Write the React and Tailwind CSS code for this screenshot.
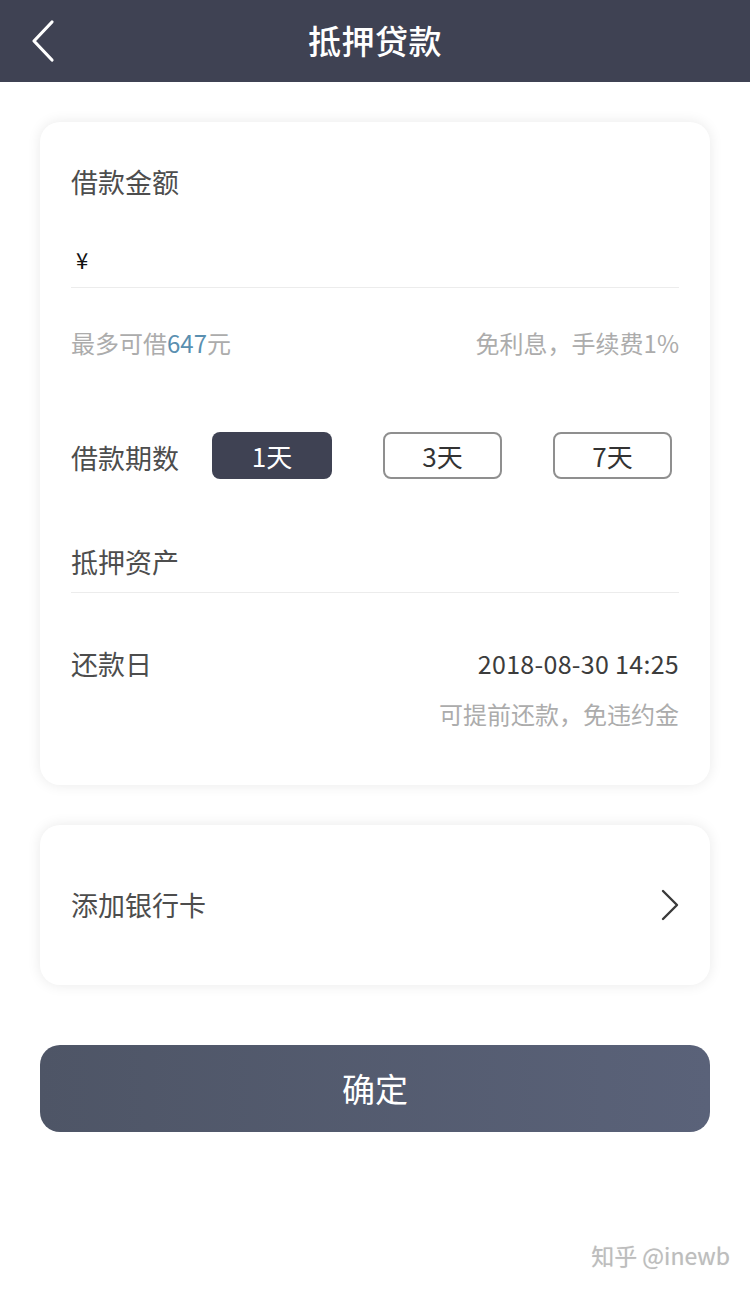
import React from 'react';

const font = { fontFamily: '"Noto Sans CJK SC", "Noto Sans", sans-serif' };

function BackIcon() {
  return (
    <svg width="30" height="44" viewBox="0 0 30 44" fill="none">
      <path d="M24 3 L6 22 L24 41" stroke="#ffffff" strokeWidth="3.2" strokeLinecap="round" strokeLinejoin="round" />
    </svg>
  );
}

function ChevronRight() {
  return (
    <svg width="22" height="34" viewBox="0 0 22 34" fill="none">
      <path d="M4 3 L18 17 L4 31" stroke="#3a3a3a" strokeWidth="2.4" strokeLinecap="round" strokeLinejoin="round" />
    </svg>
  );
}

const periods = ['1天', '3天', '7天'];

export default function App() {
  const active = 0;

  return (
    <div className="min-h-[1289px] bg-white" style={font}>
      {/* 顶部导航 */}
      <div className="h-[82px] bg-[#3f4253] flex items-center px-[28px]">
        <div className="w-[60px] flex items-center">
          <BackIcon />
        </div>
        <div className="flex-1 text-center text-white text-[33px] font-medium tracking-[0.5px]">抵押贷款</div>
        <div className="w-[60px]" />
      </div>

      <div className="px-[40px] pt-[40px]">
        {/* 借款信息 */}
        <div className="rounded-[20px] bg-white shadow-[0_0_14px_rgba(0,0,0,0.09)] px-[31px] pt-[42px] pb-[55px]">
          <div className="h-[36px] flex items-center text-[27px] text-[#4d4d4d]">借款金额</div>
          <div className="h-[88px] flex items-end pb-[13px] border-b border-[#ececec]">
            <span className="h-[30px] leading-[30px] text-[22px] text-[#111] pl-[5px]">¥</span>
          </div>
          <div className="mt-[39px] h-[32px] flex items-center justify-between text-[24px] text-[#acacac]">
            <span>
              最多可借<span className="text-[#5a8fb0]">647</span>元
            </span>
            <span>免利息，手续费1%</span>
          </div>

          <div className="mt-[73px] flex items-center">
            <span className="text-[27px] text-[#4d4d4d] mr-[33px] mt-[6px]">借款期数</span>
            <div className="flex gap-[51px]">
              {periods.map((p, i) => (
                <div
                  key={p}
                  className={
                    i === active
                      ? 'w-[120px] h-[47px] rounded-[8px] bg-[#3f4253] text-white text-[26px] flex items-center justify-center'
                      : 'w-[119px] h-[47px] rounded-[8px] border-2 border-[#8f8f8f] text-[#333] text-[26px] flex items-center justify-center'
                  }
                >
                  {p}
                </div>
              ))}
            </div>
          </div>

          <div className="mt-[65px] pb-[12px] border-b border-[#ececec]">
            <div className="h-[36px] flex items-center text-[27px] text-[#4d4d4d]">抵押资产</div>
          </div>

          <div className="mt-[53px] h-[36px] flex items-center justify-between">
            <span className="text-[27px] text-[#4d4d4d]">还款日</span>
            <span className="text-[25px] text-[#3c3c3c] tracking-[0.3px]">2018-08-30 14:25</span>
          </div>
          <div className="mt-[16px] h-[32px] flex items-center justify-end text-[24px] text-[#acacac]">
            可提前还款，免违约金
          </div>
        </div>

        {/* 银行卡 */}
        <div className="mt-[40px] h-[160px] rounded-[20px] bg-white shadow-[0_0_14px_rgba(0,0,0,0.09)] pr-[29px] pl-[31px] flex items-center justify-between">
          <span className="text-[27px] text-[#4d4d4d]">添加银行卡</span>
          <ChevronRight />
        </div>

        {/* 确定 */}
        <button className="mt-[60px] w-full h-[87px] rounded-[20px] bg-gradient-to-r from-[#4e5566] to-[#5a6279] text-white text-[33px] flex items-center justify-center">
          确定
        </button>
      </div>

      <div className="mt-[107px] pr-[20px] flex justify-end">
        <span className="h-[32px] leading-[32px] text-[23px] text-[#bdbdbd] [text-shadow:0_0_1px_rgba(0,0,0,0.15)]">知乎 @inewb</span>
      </div>
    </div>
  );
}
